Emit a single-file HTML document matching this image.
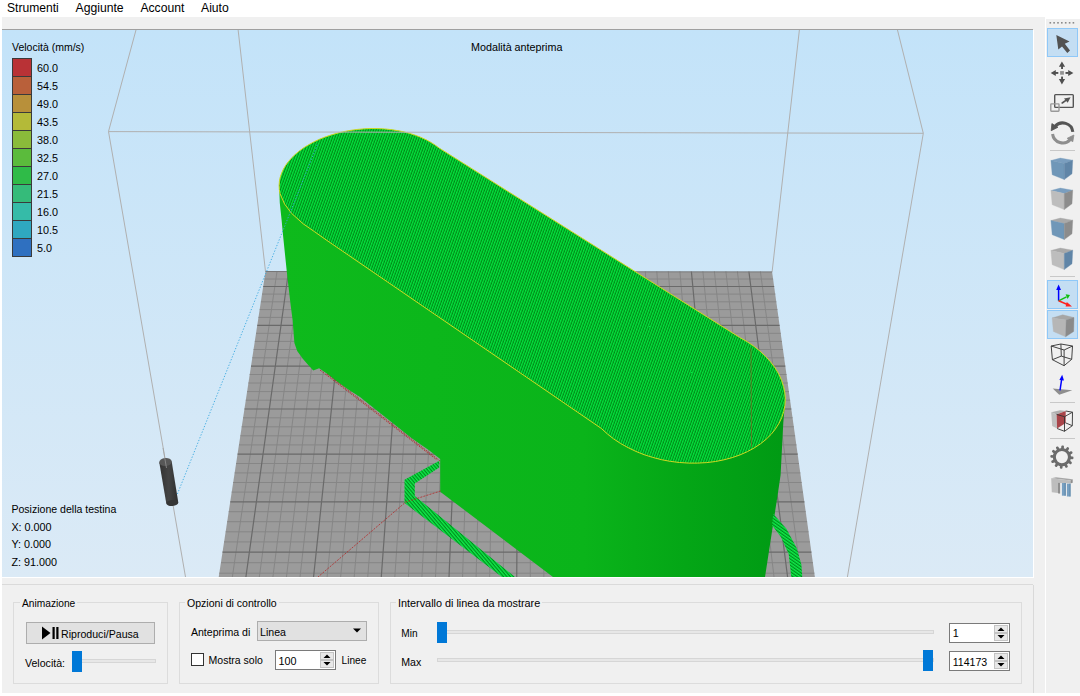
<!DOCTYPE html>
<html><head><meta charset="utf-8">
<style>
*{margin:0;padding:0;box-sizing:border-box}
html,body{width:1080px;height:696px;overflow:hidden;background:#fff;font-family:"Liberation Sans",sans-serif;color:#000}
.a{position:absolute;white-space:pre;line-height:1}
.gb{position:absolute;border:1px solid #dcdcdc}
.gbt{position:absolute;background:#f0f0f0;padding:0 2px;line-height:1;white-space:pre}
.btn{position:absolute;background:#e1e1e1;border:1px solid #adadad}
.groove{position:absolute;background:#e7e7e7;border:1px solid #d6d6d6;height:4px}
.handle{position:absolute;background:#0078d7;width:11px}
.spin{position:absolute;background:#fff;border:1px solid #7a7a7a}
.sb{position:absolute;background:#e8e8e8;border:1px solid #c4c4c4;width:14px;height:8px}
</style></head><body>
<!-- menu bar -->
<div class="a" style="left:7.0px;top:1.81px;font-size:12.1px;color:#000;">Strumenti</div>
<div class="a" style="left:75.5px;top:1.73px;font-size:12.2px;color:#000;">Aggiunte</div>
<div class="a" style="left:140.4px;top:1.73px;font-size:12.2px;color:#000;">Account</div>
<div class="a" style="left:201.0px;top:1.73px;font-size:12.2px;color:#000;">Aiuto</div>
<!-- gray strip -->
<div class="a" style="left:2px;top:17px;width:1043px;height:13px;background:#f0f0f0"></div>
<div class="a" style="left:1033px;top:17px;width:12px;height:676px;background:#f0f0f0"></div>
<div class="a" style="left:2px;top:29px;width:1031px;height:1px;background:#a0a0a0"></div>
<!-- viewport -->
<svg class="a" style="left:2px;top:30px" width="1031" height="547" viewBox="2 30 1031 547">
<defs>
<linearGradient id="bg" x1="0" y1="0" x2="0" y2="1">
<stop offset="0" stop-color="#c3e3f9"/><stop offset="1" stop-color="#dbeaf6"/>
</linearGradient>
<pattern id="tp" patternUnits="userSpaceOnUse" width="2.4" height="10" patternTransform="rotate(20)">
<rect width="2.4" height="10" fill="#008a16"/><rect x="0" width="1.25" height="10" fill="#04e440"/>
</pattern>
<pattern id="sp" patternUnits="userSpaceOnUse" width="10" height="2.6" patternTransform="rotate(35)">
<rect width="10" height="2.6" fill="#008c1c"/><rect width="10" height="1.4" fill="#10ea4a"/>
</pattern>
<pattern id="sp2" patternUnits="userSpaceOnUse" width="2.6" height="10" patternTransform="rotate(-40)">
<rect width="2.6" height="10" fill="#008c1c"/><rect width="1.4" height="10" fill="#10ea4a"/>
</pattern>
<linearGradient id="wg" gradientUnits="userSpaceOnUse" x1="280" y1="0" x2="786" y2="0">
<stop offset="0" stop-color="#0eba1c"/><stop offset="0.6" stop-color="#0ab41a"/><stop offset="0.8" stop-color="#04a616"/><stop offset="1" stop-color="#009a14"/>
</linearGradient>
</defs>
<rect x="2" y="30" width="1031" height="547" fill="url(#bg)"/>
<path d="M138.7 20L108.5 131.5L185.5 577M237 20L265.5 271.5M800.5 20L772.1 271.9M895 20L923.3 133.3L847.4 577" stroke="#b0b0b0" stroke-width="1" fill="none"/>
<polygon points="265.5,271.5 772.1,271.9 818.1,600 215.2,600" fill="#9b9b9b"/>
<path d="M264.4 279.0H773.1M262.0 294.1H775.3M260.9 301.8H776.3M259.7 309.6H777.4M258.5 317.4H778.5M256.0 333.3H780.8M254.8 341.4H781.9M253.6 349.5H783.0M252.3 357.8H784.2M249.7 374.5H786.5M248.4 383.0H787.7M247.1 391.6H788.9M245.8 400.2H790.1M243.1 417.8H792.6M241.7 426.8H793.8M240.4 435.8H795.1M239.0 444.9H796.4M236.1 463.5H799.0M234.7 472.9H800.3M233.2 482.5H801.6M231.7 492.1H803.0M228.7 511.7H805.7M227.2 521.7H807.1M225.7 531.8H808.5M224.1 541.9H810.0M221.0 562.7H812.9M219.3 573.2H814.3M217.7 583.9H815.8M216.1 594.6H817.3M277.0 271.5L229.0 600M300.0 271.5L256.3 600M311.5 271.5L270.0 600M323.1 271.5L283.7 600M334.6 271.5L297.4 600M357.6 271.5L324.8 600M369.1 271.5L338.5 600M380.6 271.5L352.2 600M392.1 271.5L365.9 600M415.1 271.5L393.3 600M426.6 271.5L407.0 600M438.1 271.5L420.7 600M449.7 271.5L434.4 600M472.7 271.5L461.8 600M484.2 271.5L475.5 600M495.7 271.5L489.2 600M507.2 271.5L502.9 600M530.2 271.5L530.3 600M541.7 271.5L544.0 600M553.2 271.5L557.7 600M564.8 271.5L571.4 600M587.8 271.5L598.8 600M599.3 271.5L612.5 600M610.8 271.5L626.1 600M622.3 271.5L639.8 600M645.3 271.5L667.2 600M656.8 271.5L680.9 600M668.3 271.5L694.6 600M679.9 271.5L708.3 600M702.9 271.5L735.7 600M714.4 271.5L749.4 600M725.9 271.5L763.1 600M737.4 271.5L776.8 600M760.4 271.5L804.2 600" stroke="#868686" stroke-width="1" fill="none"/>
<path d="M263.2 286.5H774.2M257.3 325.3H779.6M251.0 366.1H785.3M244.5 409.0H791.3M237.6 454.2H797.7M230.3 501.9H804.4M222.5 552.2H811.4M288.5 271.5L242.7 600M346.1 271.5L311.1 600M403.6 271.5L379.6 600M461.2 271.5L448.1 600M518.7 271.5L516.6 600M576.3 271.5L585.1 600M633.8 271.5L653.5 600M691.4 271.5L722.0 600M748.9 271.5L790.5 600" stroke="#6a6a6a" stroke-width="1.2" fill="none"/>
<path d="M265.5 271.5L772.1 271.9" stroke="#777" stroke-width="1" fill="none"/>
<polygon points="279.1,185.5 279.8,203 281.6,220 283,235 286.8,271.7 290.7,305.4 292.6,320 294.4,343 297.2,351 303,359.1 308.7,365.4 313.3,370.6 319.1,368.3 326,372.9 337.5,382.1 349,390.1 360,396.9 377.2,410.7 394.5,424.5 411.7,438.3 429,450.3 440.2,459 440.2,491.7 553,577 540,600 762,600 765,577 778.4,490 780.6,475 783.3,422.8 785.3,399.3" fill="url(#wg)"/>
<path d="M439.3 460.7L404.5 479.7L404.5 503L502 577L515 577L414.8 496L414.8 483.5L439.3 467.6Z" fill="url(#sp2)"/>
<path d="M773.2 513.8L786.4 528.7L796.8 548.3L801.4 564.4L802.5 580L791.6 580L788.7 554L780.7 536.8L772.1 525.3Z" fill="url(#sp)"/>
<path d="M327 374L440 461M320 370L437 460M440.6 491L405.8 502L318 577" stroke="#b42828" stroke-width="0.8" stroke-dasharray="2 1.2" fill="none"/>
<polygon points="326.0,239.8 314.5,231.7 303.0,223.7 291.5,213.3 284.6,204.1 280.0,193.6 279.3,189.5 279.1,185.5 279.4,181.4 280.2,177.3 281.6,173.2 283.4,169.2 285.7,165.3 288.5,161.5 291.8,157.7 295.5,154.2 299.6,150.8 304.2,147.5 309.1,144.5 314.3,141.7 319.8,139.1 325.7,136.8 331.7,134.8 338.0,133.0 344.4,131.5 351.0,130.3 357.7,129.4 364.4,128.8 371.1,128.5 377.8,128.6 384.5,128.9 391.1,129.6 397.5,130.6 403.7,131.8 409.7,133.4 415.5,135.3 421.0,137.4 426.2,139.8 431.0,142.4 435.4,145.3 439.5,148.3 739.6,337.4 747.0,341.6 753.8,346.2 760.1,351.2 765.8,356.6 770.8,362.2 775.2,368.0 778.8,374.1 781.6,380.3 783.6,386.6 784.9,392.9 785.3,399.3 784.9,405.5 783.7,411.7 781.7,417.7 778.9,423.5 775.3,429.1 771.1,434.4 766.1,439.3 760.4,443.9 754.1,448.0 747.3,451.7 740.0,454.9 732.2,457.6 724.0,459.8 715.5,461.5 706.7,462.6 697.7,463.1 688.7,463.1 679.5,462.5 670.5,461.4 661.5,459.7 652.7,457.4 644.1,454.7 635.9,451.4 628.0,447.6 620.6,443.5 613.6,438.9 607.3,433.9 601.5,428.6" fill="url(#tp)" stroke="#d0d820" stroke-width="1"/>
<path d="M751 348L751.5 447" stroke="#a05020" stroke-width="0.7" fill="none" opacity="0.8"/>
<path d="M108.5 131.6L923.3 133.3" stroke="#b0b0b0" stroke-width="1"/>
<linearGradient id="nz" x1="0" y1="0" x2="1" y2="0"><stop offset="0" stop-color="#333"/><stop offset="0.5" stop-color="#444"/><stop offset="1" stop-color="#2e2e2e"/></linearGradient>
<path d="M159.3 462.5L171.7 461.5L178.3 502.5L166.3 503.5Z" fill="url(#nz)"/>
<ellipse cx="172.3" cy="503" rx="6" ry="3" fill="#353535" transform="rotate(-5 172.3 503)"/>
<ellipse cx="165.5" cy="462" rx="6.3" ry="4" fill="#575757" transform="rotate(-5 165.5 462)"/>
<path d="M163 448L166.5 468" stroke="#a0a0a0" stroke-width="0.8" opacity="0.8"/>
<path d="M177.4 494L318 143" stroke="#38a8e0" stroke-width="0.9" stroke-dasharray="1.3 1.7" fill="none"/>
</svg>
<div class="a" style="left:471.0px;top:41.76px;font-size:10.75px;color:#000;">Modalità anteprima</div>
<div class="a" style="left:12px;top:58px;width:20px;height:19px;background:#b93236;border:1px solid #3a3a3a"></div>
<div class="a" style="left:37.0px;top:63.32px;font-size:10.8px;color:#000;">60.0</div>
<div class="a" style="left:12px;top:76px;width:20px;height:19px;background:#b9603a;border:1px solid #3a3a3a"></div>
<div class="a" style="left:37.0px;top:81.32px;font-size:10.8px;color:#000;">54.5</div>
<div class="a" style="left:12px;top:94px;width:20px;height:19px;background:#b8903a;border:1px solid #3a3a3a"></div>
<div class="a" style="left:37.0px;top:99.32px;font-size:10.8px;color:#000;">49.0</div>
<div class="a" style="left:12px;top:112px;width:20px;height:19px;background:#b4ba38;border:1px solid #3a3a3a"></div>
<div class="a" style="left:37.0px;top:117.32px;font-size:10.8px;color:#000;">43.5</div>
<div class="a" style="left:12px;top:130px;width:20px;height:19px;background:#8abb3a;border:1px solid #3a3a3a"></div>
<div class="a" style="left:37.0px;top:135.32px;font-size:10.8px;color:#000;">38.0</div>
<div class="a" style="left:12px;top:148px;width:20px;height:19px;background:#5bbb3c;border:1px solid #3a3a3a"></div>
<div class="a" style="left:37.0px;top:153.32px;font-size:10.8px;color:#000;">32.5</div>
<div class="a" style="left:12px;top:166px;width:20px;height:19px;background:#2fbb48;border:1px solid #3a3a3a"></div>
<div class="a" style="left:37.0px;top:171.32px;font-size:10.8px;color:#000;">27.0</div>
<div class="a" style="left:12px;top:184px;width:20px;height:19px;background:#35bb7a;border:1px solid #3a3a3a"></div>
<div class="a" style="left:37.0px;top:189.32px;font-size:10.8px;color:#000;">21.5</div>
<div class="a" style="left:12px;top:202px;width:20px;height:19px;background:#35bba8;border:1px solid #3a3a3a"></div>
<div class="a" style="left:37.0px;top:207.32px;font-size:10.8px;color:#000;">16.0</div>
<div class="a" style="left:12px;top:220px;width:20px;height:19px;background:#2fa8c0;border:1px solid #3a3a3a"></div>
<div class="a" style="left:37.0px;top:225.32px;font-size:10.8px;color:#000;">10.5</div>
<div class="a" style="left:12px;top:238px;width:20px;height:19px;background:#2f70c0;border:1px solid #3a3a3a"></div>
<div class="a" style="left:37.0px;top:243.32px;font-size:10.8px;color:#000;">5.0</div>
<div class="a" style="left:12.0px;top:42.08px;font-size:10.5px;color:#000;">Velocità (mm/s)</div>
<div class="a" style="left:11.4px;top:503.83px;font-size:10.55px;color:#000;">Posizione della testina</div>
<div class="a" style="left:11.4px;top:521.72px;font-size:10.8px;color:#000;">X: 0.000</div>
<div class="a" style="left:11.4px;top:539.32px;font-size:10.8px;color:#000;">Y: 0.000</div>
<div class="a" style="left:11.4px;top:557.42px;font-size:10.8px;color:#000;">Z: 91.000</div>
<div class="a" style="left:1033px;top:30px;width:1px;height:548px;background:#fff"></div>
<div class="a" style="left:2px;top:577px;width:1031px;height:1px;background:#fff"></div>
<!-- lower panel -->
<div class="a" style="left:2px;top:578px;width:1043px;height:115px;background:#f0f0f0"></div>
<div class="a" style="left:2px;top:584px;width:1031px;height:1px;background:#dadada"></div>
<div class="a" style="left:1033px;top:585px;width:1px;height:108px;background:#d9d9d9"></div>
<!-- group: Animazione -->
<div class="gb" style="left:13px;top:602px;width:155px;height:82px"></div>
<div class="gbt" style="left:20px;top:598.5px;font-size:10.2px;height:10px">Animazione</div>
<div class="btn" style="left:26px;top:622px;width:129px;height:22px"></div>
<svg class="a" style="left:40px;top:624px" width="22" height="18"><path d="M2 2.5L10.5 9L2 15.5Z" fill="#000"/><rect x="12.5" y="3" width="2.2" height="12" fill="#000"/><rect x="16.3" y="3" width="2.2" height="12" fill="#000"/></svg>
<div class="a" style="left:61.0px;top:628.79px;font-size:10.6px;color:#000;">Riproduci/Pausa</div>
<div class="a" style="left:25.0px;top:657.79px;font-size:10.6px;color:#000;">Velocità:</div>
<div class="groove" style="left:72px;top:659px;width:84px"></div>
<div class="handle" style="left:72px;top:651px;height:21px;width:10px"></div>
<!-- group: Opzioni -->
<div class="gb" style="left:179px;top:602px;width:200px;height:82px"></div>
<div class="gbt" style="left:185px;top:598px;font-size:10.55px;height:10px">Opzioni di controllo</div>
<div class="a" style="left:190.9px;top:626.79px;font-size:10.6px;color:#000;">Anteprima di</div>
<div class="btn" style="left:257px;top:621px;width:110px;height:20px"></div>
<div class="a" style="left:260.0px;top:626.79px;font-size:10.6px;color:#000;">Linea</div>
<svg class="a" style="left:353px;top:628px" width="9" height="6"><path d="M0 0.5H8L4 4.5Z" fill="#000"/></svg>
<div class="a" style="left:191px;top:653px;width:13px;height:13px;background:#fff;border:1px solid #333"></div>
<div class="a" style="left:208.6px;top:654.78px;font-size:10.5px;color:#000;">Mostra solo</div>
<div class="spin" style="left:275px;top:650px;width:61px;height:20px"></div>
<div class="a" style="left:278.5px;top:655.82px;font-size:10.8px;color:#000;">100</div>
<div class="sb" style="left:320px;top:652px"></div>
<div class="sb" style="left:320px;top:660px"></div>
<svg class="a" style="left:320px;top:652px" width="14" height="16"><path d="M3.5 6H10.5L7 2.5Z M3.5 10H10.5L7 13.5Z" fill="#000"/></svg>
<div class="a" style="left:341.6px;top:656.41px;font-size:10.1px;color:#000;">Linee</div>
<!-- group: Intervallo -->
<div class="gb" style="left:390px;top:602px;width:632px;height:82px"></div>
<div class="gbt" style="left:396px;top:597.8px;font-size:10.85px;height:10px">Intervallo di linea da mostrare</div>
<div class="a" style="left:401.3px;top:629.31px;font-size:10.1px;color:#000;">Min</div>
<div class="a" style="left:401.3px;top:656.79px;font-size:10.6px;color:#000;">Max</div>
<div class="groove" style="left:437px;top:630px;width:497px"></div>
<div class="handle" style="left:437px;top:622px;height:21px;width:10px"></div>
<div class="groove" style="left:437px;top:658px;width:497px"></div>
<div class="handle" style="left:923px;top:650px;height:21px;width:10px"></div>
<div class="spin" style="left:949px;top:623px;width:61px;height:20px"></div>
<div class="a" style="left:952.7px;top:628.32px;font-size:10.8px;color:#000;">1</div>
<div class="sb" style="left:994px;top:625px"></div>
<div class="sb" style="left:994px;top:633px"></div>
<svg class="a" style="left:994px;top:625px" width="14" height="16"><path d="M3.5 6H10.5L7 2.5Z M3.5 10H10.5L7 13.5Z" fill="#000"/></svg>
<div class="spin" style="left:949px;top:651px;width:61px;height:20px"></div>
<div class="a" style="left:952.7px;top:656.79px;font-size:10.6px;color:#000;">114173</div>
<div class="sb" style="left:994px;top:653px"></div>
<div class="sb" style="left:994px;top:661px"></div>
<svg class="a" style="left:994px;top:653px" width="14" height="16"><path d="M3.5 6H10.5L7 2.5Z M3.5 10H10.5L7 13.5Z" fill="#000"/></svg>
<!-- right toolbar -->
<div class="a" style="left:1045px;top:18px;width:35px;height:675px;background:#f0f0f0;border-left:1px solid #fff;border-top:1px solid #fff"></div>
<svg class="a" style="left:1045px;top:18px" width="35" height="490" viewBox="1045 18 35 490"><rect x="1049.5" y="22" width="1.6" height="1.6" fill="#8a8a8a"/><rect x="1053.3" y="22" width="1.6" height="1.6" fill="#8a8a8a"/><rect x="1057.2" y="22" width="1.6" height="1.6" fill="#8a8a8a"/><rect x="1061.0" y="22" width="1.6" height="1.6" fill="#8a8a8a"/><rect x="1064.9" y="22" width="1.6" height="1.6" fill="#8a8a8a"/><rect x="1068.8" y="22" width="1.6" height="1.6" fill="#8a8a8a"/><rect x="1072.6" y="22" width="1.6" height="1.6" fill="#8a8a8a"/><rect x="1047.5" y="28.5" width="30" height="28" fill="#c4def3" stroke="#8fc8f8" stroke-width="1"/><path d="M1056.3 35L1069.5 41.5L1064.8 43.8L1070 50.5L1067.3 53L1062 46.5L1058.3 49.5Z" fill="#525252"/><g fill="#505050"><path d="M1061.9 61.6L1065.1 66.8L1058.9 66.8Z M1061.9 84.4L1065.1 79.1L1058.9 79.1Z M1050.7 72.9L1055.8 69.9L1055.8 75.9Z M1073.4 72.9L1068.2 69.9L1068.2 75.9Z"/><rect x="1061.1" y="66" width="1.9" height="3"/><rect x="1061.1" y="76.6" width="1.9" height="3"/><rect x="1055" y="72" width="3.3" height="1.9"/><rect x="1065.5" y="72" width="3.3" height="1.9"/></g><rect x="1060.1" y="71.1" width="3.8" height="3.6" fill="#939393"/><rect x="1054.7" y="94.6" width="18.6" height="12.8" rx="0.8" fill="none" stroke="#555" stroke-width="1.4"/><rect x="1050.8" y="103.9" width="8.2" height="7.3" rx="0.6" fill="none" stroke="#999" stroke-width="1.4"/><path d="M1062.2 103L1066.6 99.8" stroke="#555" stroke-width="1.6" stroke-linecap="round"/><path d="M1070.6 97.2L1064 98.4L1067.7 102.7Z" fill="#555"/><path d="M1072.84 131.83A10.2 10.2 0 0 0 1055 126.5" fill="none" stroke="#555" stroke-width="3"/><path d="M1051.9 123.6L1051.2 130.7L1057.9 127.3Z" fill="#555" stroke="#555" stroke-width="0.8" stroke-linejoin="round"/><path d="M1052.56 133.97A10.2 10.2 0 0 0 1070.5 139.2" fill="none" stroke="#8e8e8e" stroke-width="3"/><path d="M1073.9 135L1072.8 141.7L1067.2 138.3Z" fill="#8e8e8e" stroke="#8e8e8e" stroke-width="0.8" stroke-linejoin="round"/><rect x="1050" y="150" width="25" height="1" fill="#c8c8c8"/><polygon points="1050.9,160.5 1060.3,158.1 1072.7,160.2 1064.3,163.6" fill="#7a9ebf" stroke="#7a9ebf" stroke-width="0.35" stroke-linejoin="round"/><polygon points="1050.9,160.5 1064.3,163.6 1064.3,179.6 1052.2,174.7" fill="#7097b8" stroke="#7097b8" stroke-width="0.35" stroke-linejoin="round"/><polygon points="1064.3,163.6 1072.7,160.2 1072.0,173.8 1064.3,179.6" fill="#6085a7" stroke="#6085a7" stroke-width="0.35" stroke-linejoin="round"/><polygon points="1050.9,190.5 1060.3,188.1 1072.7,190.2 1064.3,193.6" fill="#7a9ebf" stroke="#7a9ebf" stroke-width="0.35" stroke-linejoin="round"/><polygon points="1050.9,190.5 1064.3,193.6 1064.3,209.6 1052.2,204.7" fill="#bdbdbd" stroke="#bdbdbd" stroke-width="0.35" stroke-linejoin="round"/><polygon points="1064.3,193.6 1072.7,190.2 1072.0,203.8 1064.3,209.6" fill="#8c8c8c" stroke="#8c8c8c" stroke-width="0.35" stroke-linejoin="round"/><polygon points="1050.9,220.5 1060.3,218.1 1072.7,220.2 1064.3,223.6" fill="#a9a9a9" stroke="#a9a9a9" stroke-width="0.35" stroke-linejoin="round"/><polygon points="1050.9,220.5 1064.3,223.6 1064.3,239.6 1052.2,234.7" fill="#7097b8" stroke="#7097b8" stroke-width="0.35" stroke-linejoin="round"/><polygon points="1064.3,223.6 1072.7,220.2 1072.0,233.8 1064.3,239.6" fill="#8c8c8c" stroke="#8c8c8c" stroke-width="0.35" stroke-linejoin="round"/><polygon points="1050.9,250.5 1060.3,248.1 1072.7,250.2 1064.3,253.6" fill="#a9a9a9" stroke="#a9a9a9" stroke-width="0.35" stroke-linejoin="round"/><polygon points="1050.9,250.5 1064.3,253.6 1064.3,269.6 1052.2,264.7" fill="#bdbdbd" stroke="#bdbdbd" stroke-width="0.35" stroke-linejoin="round"/><polygon points="1064.3,253.6 1072.7,250.2 1072.0,263.8 1064.3,269.6" fill="#6085a7" stroke="#6085a7" stroke-width="0.35" stroke-linejoin="round"/><rect x="1050" y="276" width="25" height="1" fill="#c8c8c8"/><rect x="1047.5" y="280.5" width="30" height="28" fill="#c4def3" stroke="#8fc8f8" stroke-width="1"/><path d="M1058.6 300.8V289" stroke="#0000ff" stroke-width="1.5"/><path d="M1058.6 284.5L1061 290L1056.2 290Z" fill="#0000ff"/><path d="M1058.6 300.8L1066.5 296.8" stroke="#10c010" stroke-width="1.5"/><path d="M1070 295L1065.6 294.2L1067.6 299Z" fill="#10c010"/><path d="M1058.6 300.8L1068 304.8" stroke="#ff2020" stroke-width="1.5"/><path d="M1072 306.5L1066.8 302L1065.6 306.5Z" fill="#ff2020"/><rect x="1047.5" y="310.5" width="30" height="28" fill="#c4def3" stroke="#8fc8f8" stroke-width="1"/><polygon points="1052.1,318.0 1062.7,314.8 1074.0,317.5 1066.2,320.1" fill="#a6a6a6" stroke="#a6a6a6" stroke-width="0.35" stroke-linejoin="round"/><polygon points="1052.1,318.0 1066.2,320.1 1065.6,336.8 1053.4,331.5" fill="#b6b6b6" stroke="#b6b6b6" stroke-width="0.35" stroke-linejoin="round"/><polygon points="1066.2,320.1 1074.0,317.5 1073.7,331.5 1065.6,336.8" fill="#8a8a8a" stroke="#8a8a8a" stroke-width="0.35" stroke-linejoin="round"/><path d="M1051.2 346L1060.9 344L1072.5 346L1064.1 350ZM1051.2 346L1052.4 359.7L1064.1 365.7L1071.7 359.3L1072.5 346M1064.1 350L1064.1 365.7M1060.9 344L1061.3 356.1L1052.4 359.7M1061.3 356.1L1071.7 359.3" fill="none" stroke="#3a3a3a" stroke-width="0.95" stroke-linejoin="round"/><path d="M1052.7 388.5L1072.3 390.3L1059.2 394.7Z" fill="#8e8e8e"/><path d="M1060 390.3L1061.7 379" stroke="#0000ff" stroke-width="1.5"/><path d="M1062.2 374.8L1064 380.5L1059.4 380Z" fill="#0000ff"/><rect x="1050" y="402" width="25" height="1" fill="#c8c8c8"/><path d="M1051.2 412.2L1060.1 410.2L1065.7 411L1056.6 414.4Z" fill="#b0b0b0"/><path d="M1051.2 412.2L1056.6 414.4L1057.1 428.5L1052.2 426.1Z" fill="#c0c0c0"/><path d="M1056.6 414.4L1065.7 411L1065.7 422.9L1057.1 428.5Z" fill="#a9454a"/><path d="M1056.6 414.4L1064.5 416.7L1072.5 412.2L1065.7 411M1064.5 416.7L1064.5 431.3L1057.1 428.5M1064.5 431.3L1072.3 425.7L1072.5 412.2M1065.7 422.9L1072.3 425.7" fill="none" stroke="#333" stroke-width="0.9"/><rect x="1050" y="438" width="25" height="1" fill="#c8c8c8"/><g fill="#6b6b6b"><rect x="1060.55" y="445.50" width="2.7" height="4.5" rx="1.1" transform="rotate(4 1061.9 457.1)"/><rect x="1060.55" y="445.50" width="2.7" height="4.5" rx="1.1" transform="rotate(34 1061.9 457.1)"/><rect x="1060.55" y="445.50" width="2.7" height="4.5" rx="1.1" transform="rotate(64 1061.9 457.1)"/><rect x="1060.55" y="445.50" width="2.7" height="4.5" rx="1.1" transform="rotate(94 1061.9 457.1)"/><rect x="1060.55" y="445.50" width="2.7" height="4.5" rx="1.1" transform="rotate(124 1061.9 457.1)"/><rect x="1060.55" y="445.50" width="2.7" height="4.5" rx="1.1" transform="rotate(154 1061.9 457.1)"/><rect x="1060.55" y="445.50" width="2.7" height="4.5" rx="1.1" transform="rotate(184 1061.9 457.1)"/><rect x="1060.55" y="445.50" width="2.7" height="4.5" rx="1.1" transform="rotate(214 1061.9 457.1)"/><rect x="1060.55" y="445.50" width="2.7" height="4.5" rx="1.1" transform="rotate(244 1061.9 457.1)"/><rect x="1060.55" y="445.50" width="2.7" height="4.5" rx="1.1" transform="rotate(274 1061.9 457.1)"/><rect x="1060.55" y="445.50" width="2.7" height="4.5" rx="1.1" transform="rotate(304 1061.9 457.1)"/><rect x="1060.55" y="445.50" width="2.7" height="4.5" rx="1.1" transform="rotate(334 1061.9 457.1)"/></g><circle cx="1061.9" cy="457.1" r="7.6" fill="none" stroke="#6b6b6b" stroke-width="3.1"/><path d="M1051.2 478.2L1056 477.2L1072.7 479.2L1070.5 480.4Z" fill="#a6a6a6"/><path d="M1051.2 478.2L1070.5 480.4L1070.5 483.5L1060.1 482.9L1060.1 493.7L1058 492.9L1051.8 492.2Z" fill="#bdbdbd"/><path d="M1070.5 480.4L1072.7 479.2L1072.7 482.7L1070.5 483.5Z" fill="#8e8e8e"/><rect x="1058" y="482.9" width="2.1" height="10.5" fill="#8f8f8f"/><rect x="1061.9" y="483" width="3.8" height="12.7" fill="#78a0c2"/><rect x="1066.9" y="483.7" width="3.6" height="12.8" fill="#78a0c2"/><rect x="1064.6" y="483" width="1.1" height="12.7" fill="#5f87a8"/><rect x="1069.5" y="483.7" width="1" height="12.8" fill="#5f87a8"/></svg>
</body></html>
